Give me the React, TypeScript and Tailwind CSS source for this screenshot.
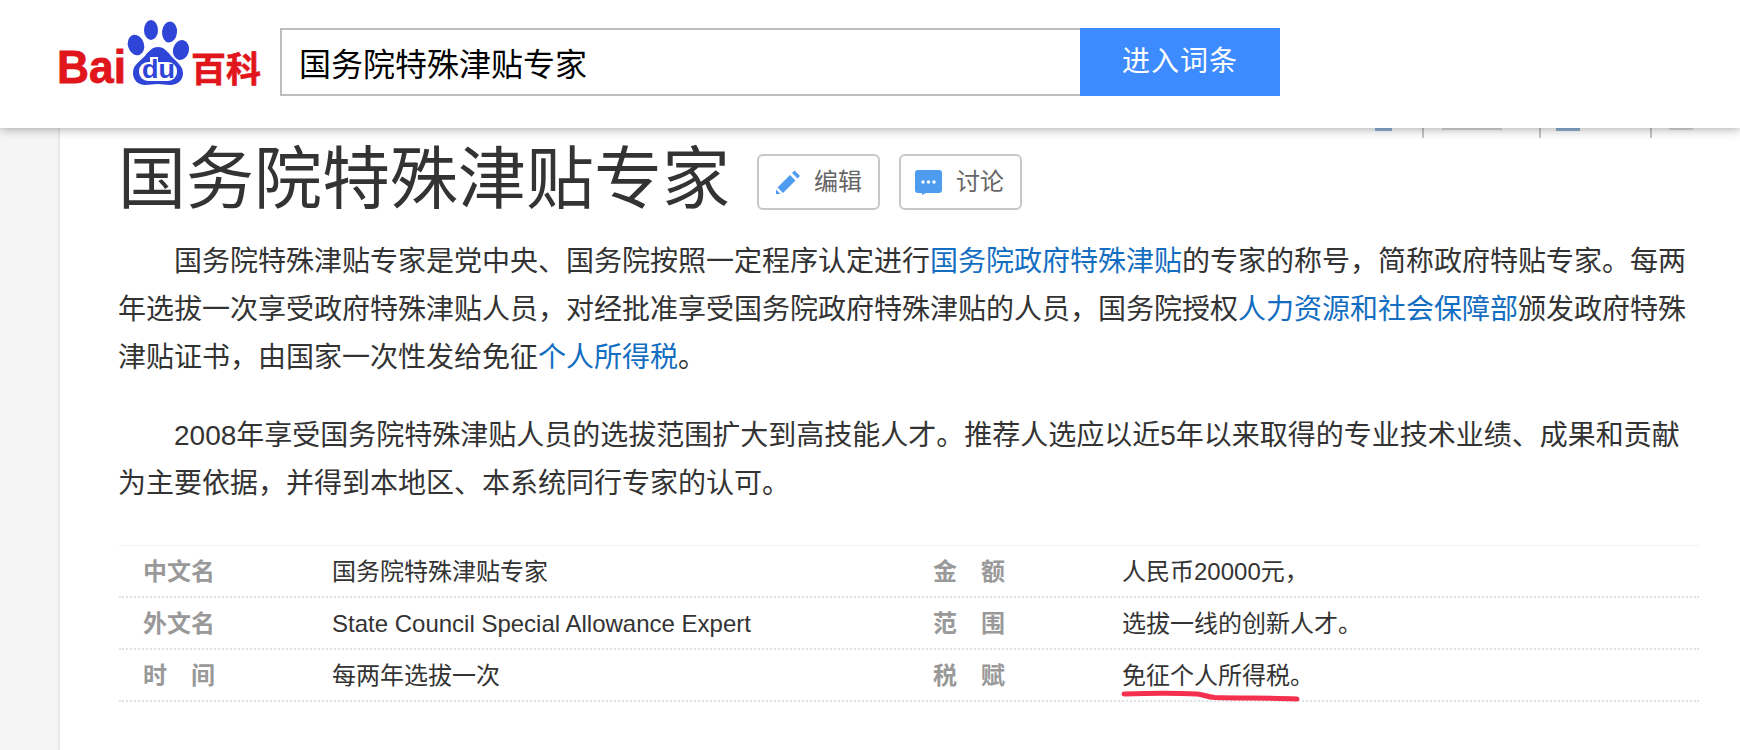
const A = ({ children }: { children: React.ReactNode }) => (
  <a className="text-[#136ec2]">{children}</a>
);

function Logo() {
  return (
    <svg width="220" height="90" viewBox="50 15 220 90" className="shrink-0 mt-[15px]">
      <text x="57" y="83" fontFamily="Liberation Sans" fontWeight="700" fontSize="46" fill="#e1151c" stroke="#e1151c" strokeWidth="0.8" textLength="69" lengthAdjust="spacingAndGlyphs">Bai</text>
      <g fill="#2f45d8">
        <ellipse cx="136" cy="45" rx="8" ry="10.5" transform="rotate(-18 136 45)" />
        <ellipse cx="151" cy="30" rx="7" ry="10" />
        <ellipse cx="169.5" cy="32" rx="7.5" ry="10.5" transform="rotate(5 169.5 32)" />
        <ellipse cx="181" cy="50" rx="8" ry="10" transform="rotate(15 181 50)" />
        <path d="M158 47c6 0 10 5 14 10 4 4 11 9 11 16 0 8-6 12-13 12-5 0-8-1-12-1-5 0-8 1-13 1-7 0-12-5-12-12 0-8 6-11 11-16 4-5 8-10 14-10z" />
      </g>
      <rect x="139" y="62" width="38" height="19" rx="9" fill="#ffffff" />
      <rect x="150" y="57" width="8" height="8" fill="#ffffff" />
      <text x="142" y="78" fontFamily="Liberation Sans" fontWeight="700" fontSize="26" fill="#2f45d8" textLength="33" lengthAdjust="spacingAndGlyphs">du</text>
      <text x="191" y="82" fontFamily="Noto Sans CJK SC" fontWeight="700" fontSize="35" fill="#e1151c" stroke="#e1151c" strokeWidth="0.6">百科</text>
    </svg>
  );
}

function Row({ cells }: { cells: [string, React.ReactNode, string, React.ReactNode] }) {
  return (
    <div className="grid grid-cols-[189px_601px_189px_1fr] h-[52px] pl-[24px] items-center border-b-2 border-dotted border-[#dde3e3] pt-[1px]">
      <Label text={cells[0]} />
      <div>{cells[1]}</div>
      <Label text={cells[2]} />
      <div className="relative">{cells[3]}</div>
    </div>
  );
}

function Label({ text }: { text: string }) {
  return (
    <div className="w-[72px] flex justify-between font-bold text-[#999999]">
      {Array.from(text).map((c, i) => (
        <span key={i}>{c}</span>
      ))}
    </div>
  );
}

export default function App() {
  return (
    <div lang="zh-CN" className="h-[750px] overflow-hidden bg-white text-[#333333] whitespace-nowrap font-['Liberation_Sans','Noto_Sans_CJK_SC',sans-serif]">
      <header className="relative z-10 h-[128px] bg-white flex items-start pl-[50px] gap-[10px] shadow-[0_1px_10px_rgba(0,0,0,0.35)]">
        <Logo />
        <div className="flex mt-[28px]">
          <input
            readOnly
            value="国务院特殊津贴专家"
            className="w-[800px] h-[68px] border-2 border-r-0 border-[#bdbdbd] pl-[17px] text-[32px] text-black outline-none font-['Liberation_Sans','Noto_Sans_CJK_SC',sans-serif]"
          />
          <div className="w-[200px] h-[68px] bg-[#3d8bff] text-white text-[28px] tracking-[1px] flex items-center justify-center">
            进入词条
          </div>
        </div>
      </header>

      <div className="flex h-[622px]">
        <aside className="w-[60px] shrink-0 bg-[#f5f5f5] border-r-2 border-[#e8e8e8]" />
        <main className="pl-[59px] w-[1639px]">
          <div className="flex items-start h-[10px] pl-[1256px]">
            <div className="w-[17px] h-[3px] bg-[#8fb3d6]" />
            <div className="w-[2px] h-[10px] bg-[#c4c4c4] ml-[30px]" />
            <div className="w-[60px] h-[2px] bg-[#dddddd] ml-[18px]" />
            <div className="w-[2px] h-[10px] bg-[#c4c4c4] ml-[37px]" />
            <div className="w-[24px] h-[3px] bg-[#8fb3d6] ml-[15px]" />
            <div className="w-[2px] h-[10px] bg-[#c4c4c4] ml-[70px]" />
            <div className="w-[24px] h-[2px] bg-[#dddddd] ml-[17px]" />
          </div>

          <div className="flex items-start h-[87px] -ml-[1px]">
            <h1 className="text-[68px] leading-[76px] font-normal mt-[3px]">国务院特殊津贴专家</h1>
            <div className="flex gap-[19px] mt-[16px] ml-[27px] text-[24px] text-[#666666]">
              <div className="w-[123px] h-[56px] rounded-md border-2 border-[#c8c8c8] flex items-center pl-[17px] gap-[14px]">
                <svg width="24" height="24" viewBox="0 0 24 24" className="shrink-0">
                  <g fill="#4d9cf0">
                    <polygon points="1.5,17.5 14,5 19.5,10.5 7,23" />
                    <polygon points="16,3 18.5,0.5 24,6 21.5,8.5" />
                    <polygon points="0,19.5 4.5,24 0,24" />
                  </g>
                </svg>
                编辑
              </div>
              <div className="w-[123px] h-[56px] rounded-md border-2 border-[#c8c8c8] flex items-center pl-[14px] gap-[14px]">
                <svg width="27" height="25" viewBox="0 0 27 25" className="shrink-0">
                  <path d="M3 0h21a3 3 0 0 1 3 3v17a3 3 0 0 1-3 3H11l-4 2v-2H3a3 3 0 0 1-3-3V3a3 3 0 0 1 3-3z" fill="#4d9cf0" />
                  <circle cx="8" cy="12" r="1.7" fill="#fff" />
                  <circle cx="13.5" cy="12" r="1.7" fill="#fff" />
                  <circle cx="19" cy="12" r="1.7" fill="#fff" />
                </svg>
                讨论
              </div>
            </div>
          </div>
          <div className="text-[28px] leading-[48px] mt-[13px] -ml-[1px]">
            <p className="mb-[30px]">
              <span className="pl-[56px]">国务院特殊津贴专家是党中央、国务院按照一定程序认定进行</span>
              <A>国务院政府特殊津贴</A>的专家的称号，简称政府特贴专家。每两
              <br />
              年选拔一次享受政府特殊津贴人员，对经批准享受国务院政府特殊津贴的人员，国务院授权
              <A>人力资源和社会保障部</A>颁发政府特殊
              <br />
              津贴证书，由国家一次性发给免征<A>个人所得税</A>。
            </p>
            <p>
              <span className="pl-[56px]">2008年享受国务院特殊津贴人员的选拔范围扩大到高技能人才。推荐人选应以近5年以来取得的专业技术业绩、成果和贡献</span>
              <br />
              为主要依据，并得到本地区、本系统同行专家的认可。
            </p>
          </div>

          <div className="w-[1580px] mt-[37px] border-t border-[#f3f3f3] text-[24px] leading-[30px]">
            <Row cells={["中文名", "国务院特殊津贴专家", "金额", "人民币20000元，"]} />
            <Row cells={["外文名", "State Council Special Allowance Expert", "范围", "选拔一线的创新人才。"]} />
            <Row
              cells={[
                "时间",
                "每两年选拔一次",
                "税赋",
                <>
                  免征个人所得税。
                  <svg width="178" height="12" viewBox="0 0 178 12" className="absolute left-0 top-[30px] overflow-visible">
                    <path d="M2 3C30 2 55 2 75 3c6 .5 10 3 18 3.5 25 1 55 0 82 1.5" fill="none" stroke="#f5304e" strokeWidth="5" strokeLinecap="round" />
                  </svg>
                </>,
              ]}
            />
          </div>
        </main>
      </div>
    </div>
  );
}
